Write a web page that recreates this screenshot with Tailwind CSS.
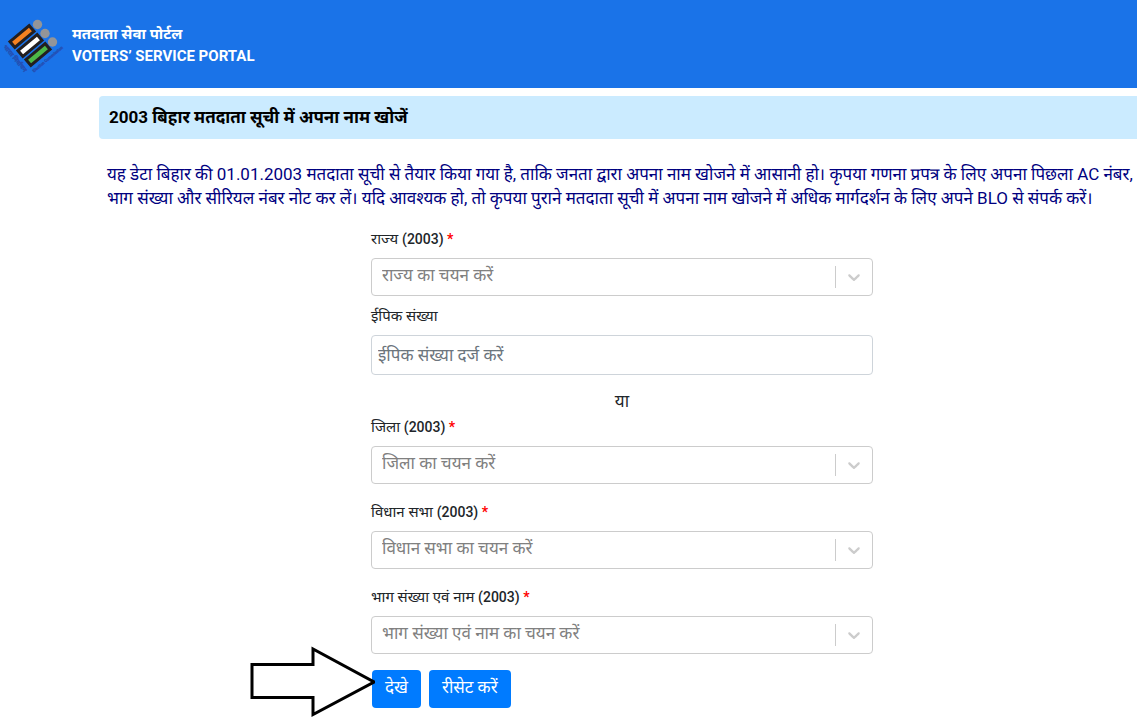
<!DOCTYPE html>
<html lang="hi">
  <head>
    <meta charset="UTF-8" />
    <meta name="viewport" content="width=device-width, initial-scale=1.0" />
    <title>Voters' Service Portal</title>
    <script src="https://cdn.jsdelivr.net/npm/@tailwindcss/browser@4"></script>
  </head>
  <body class="min-h-screen bg-white font-[Roboto,'Noto_Sans_Devanagari','Noto_Sans',sans-serif] text-[17px] text-[#212529]">
    <header class="flex h-[88px] items-center gap-3 bg-[#1a73e8] px-1">
      <svg class="h-14 w-14 shrink-0 overflow-visible" viewBox="0 0 56 56" aria-hidden="true">
        <g fill="#939598">
          <circle cx="33.5" cy="8.5" r="4.7" />
          <circle cx="41" cy="17.5" r="4.7" />
          <circle cx="48.5" cy="26" r="4.7" />
        </g>
        <g stroke="#231f20" stroke-width="3">
          <rect x="-12.5" y="-3.8" width="25" height="7.6" fill="#f58220" transform="translate(18 20.5) rotate(-40)" />
          <rect x="-12.5" y="-3.8" width="25" height="7.6" fill="#fff" transform="translate(26 29.5) rotate(-40)" />
          <rect x="-12.5" y="-3.8" width="25" height="7.6" fill="#4db848" transform="translate(34 38.5) rotate(-40)" />
        </g>
        <g fill="#2450b4" stroke="#2450b4" stroke-width="0.4" font-weight="700">
          <text transform="translate(-1 31) rotate(50)" font-size="6">भारत निर्वाचन</text>
          <text transform="translate(30 56.5) rotate(-40)" font-size="4">Election Commission</text>
        </g>
      </svg>
      <div class="pt-0.5 text-[15px] leading-[22px] font-bold text-white">
        <p>मतदाता सेवा पोर्टल</p>
        <p>VOTERS’ SERVICE PORTAL</p>
      </div>
    </header>

    <main class="mt-2 ml-[99px]">
      <h1 class="rounded-l bg-[#cbebff] px-2.5 py-2 leading-[27px] font-bold text-black">
        2003 बिहार मतदाता सूची में अपना नाम खोजें
      </h1>

      <div class="pt-[23px] pl-2">
        <p class="leading-6 text-[#000080]">
          यह डेटा बिहार की 01.01.2003 मतदाता सूची से तैयार किया गया है, ताकि जनता द्वारा अपना नाम खोजने में आसानी हो। कृपया गणना प्रपत्र के लिए अपना पिछला AC नंबर,
          भाग संख्या और सीरियल नंबर नोट कर लें। यदि आवश्यक हो, तो कृपया पुराने मतदाता सूची में अपना नाम खोजने में अधिक मार्गदर्शन के लिए अपने BLO से संपर्क करें।
        </p>

        <form class="mx-auto mt-[19px] max-w-[502px]">
          <label for="state" class="mb-2 block text-[15px] leading-[21px]">राज्य <span class="text-sm leading-[21px] font-medium">(2003) <span class="font-bold text-[#ff0000]">*</span></span></label>
          <div class="relative">
            <select id="state" class="block h-[38px] w-full appearance-none rounded border border-[#cccccc] bg-white pr-12 pb-0.5 pl-2.5 text-[#808080]">
              <option>राज्य का चयन करें</option>
            </select>
            <div class="pointer-events-none absolute inset-y-2 right-0 flex w-[38px] items-center justify-center border-l border-[#cccccc] pr-0.5">
              <svg class="h-5 w-5 fill-[#cccccc]" viewBox="0 0 20 20" aria-hidden="true"><path d="M4.516 7.548c0.436-0.446 1.043-0.481 1.576 0l3.908 3.747 3.908-3.747c0.533-0.481 1.141-0.446 1.574 0 0.436 0.445 0.408 1.197 0 1.615-0.406 0.418-4.695 4.502-4.695 4.502-0.217 0.223-0.502 0.335-0.787 0.335s-0.57-0.112-0.789-0.335c0 0-4.287-4.084-4.695-4.502s-0.436-1.17 0-1.615z" /></svg>
            </div>
          </div>

          <label for="epic" class="mt-[10px] mb-2 block text-[15px] leading-[21px]">ईपिक संख्या</label>
          <input id="epic" type="text" placeholder="ईपिक संख्या दर्ज करें" class="block h-10 w-full rounded border border-[#ced4da] px-1.5 placeholder:text-[#6c757d]" />

          <p class="mt-[14px] mb-1 text-center leading-6">या</p>

          <label for="district" class="mb-2 block text-[15px] leading-[21px]">जिला <span class="text-sm leading-[21px] font-medium">(2003) <span class="font-bold text-[#ff0000]">*</span></span></label>
          <div class="relative">
            <select id="district" class="block h-[38px] w-full appearance-none rounded border border-[#cccccc] bg-white pr-12 pb-0.5 pl-2.5 text-[#808080]">
              <option>जिला का चयन करें</option>
            </select>
            <div class="pointer-events-none absolute inset-y-2 right-0 flex w-[38px] items-center justify-center border-l border-[#cccccc] pr-0.5">
              <svg class="h-5 w-5 fill-[#cccccc]" viewBox="0 0 20 20" aria-hidden="true"><path d="M4.516 7.548c0.436-0.446 1.043-0.481 1.576 0l3.908 3.747 3.908-3.747c0.533-0.481 1.141-0.446 1.574 0 0.436 0.445 0.408 1.197 0 1.615-0.406 0.418-4.695 4.502-4.695 4.502-0.217 0.223-0.502 0.335-0.787 0.335s-0.57-0.112-0.789-0.335c0 0-4.287-4.084-4.695-4.502s-0.436-1.17 0-1.615z" /></svg>
            </div>
          </div>

          <label for="assembly" class="mt-[18px] mb-2 block text-[15px] leading-[21px]">विधान सभा <span class="text-sm leading-[21px] font-medium">(2003) <span class="font-bold text-[#ff0000]">*</span></span></label>
          <div class="relative">
            <select id="assembly" class="block h-[38px] w-full appearance-none rounded border border-[#cccccc] bg-white pr-12 pb-0.5 pl-2.5 text-[#808080]">
              <option>विधान सभा का चयन करें</option>
            </select>
            <div class="pointer-events-none absolute inset-y-2 right-0 flex w-[38px] items-center justify-center border-l border-[#cccccc] pr-0.5">
              <svg class="h-5 w-5 fill-[#cccccc]" viewBox="0 0 20 20" aria-hidden="true"><path d="M4.516 7.548c0.436-0.446 1.043-0.481 1.576 0l3.908 3.747 3.908-3.747c0.533-0.481 1.141-0.446 1.574 0 0.436 0.445 0.408 1.197 0 1.615-0.406 0.418-4.695 4.502-4.695 4.502-0.217 0.223-0.502 0.335-0.787 0.335s-0.57-0.112-0.789-0.335c0 0-4.287-4.084-4.695-4.502s-0.436-1.17 0-1.615z" /></svg>
            </div>
          </div>

          <label for="part" class="mt-[18px] mb-2 block text-[15px] leading-[21px]">भाग संख्या एवं नाम <span class="text-sm leading-[21px] font-medium">(2003) <span class="font-bold text-[#ff0000]">*</span></span></label>
          <div class="relative">
            <select id="part" class="block h-[38px] w-full appearance-none rounded border border-[#cccccc] bg-white pr-12 pb-0.5 pl-2.5 text-[#808080]">
              <option>भाग संख्या एवं नाम का चयन करें</option>
            </select>
            <div class="pointer-events-none absolute inset-y-2 right-0 flex w-[38px] items-center justify-center border-l border-[#cccccc] pr-0.5">
              <svg class="h-5 w-5 fill-[#cccccc]" viewBox="0 0 20 20" aria-hidden="true"><path d="M4.516 7.548c0.436-0.446 1.043-0.481 1.576 0l3.908 3.747 3.908-3.747c0.533-0.481 1.141-0.446 1.574 0 0.436 0.445 0.408 1.197 0 1.615-0.406 0.418-4.695 4.502-4.695 4.502-0.217 0.223-0.502 0.335-0.787 0.335s-0.57-0.112-0.789-0.335c0 0-4.287-4.084-4.695-4.502s-0.436-1.17 0-1.615z" /></svg>
            </div>
          </div>

          <div class="relative mt-4 flex gap-2 pl-px">
            <button type="button" class="h-[38px] rounded bg-[#007bff] px-[13px] pb-0.5 text-white">देखे</button>
            <button type="reset" class="h-[38px] rounded bg-[#007bff] px-[13px] pb-0.5 text-white">रीसेट करें</button>
            <!-- arrow pointing at the first button -->
            <svg class="pointer-events-none absolute -top-6 right-full -mr-1 h-[72px] w-[126px]" viewBox="0 0 126 72" aria-hidden="true">
              <path d="M3 18.5H64V3L125 36 64 68.5V51.5H3Z" fill="#fff" stroke="#000" stroke-width="3" />
            </svg>
          </div>
        </form>
      </div>
    </main>
  </body>
</html>
